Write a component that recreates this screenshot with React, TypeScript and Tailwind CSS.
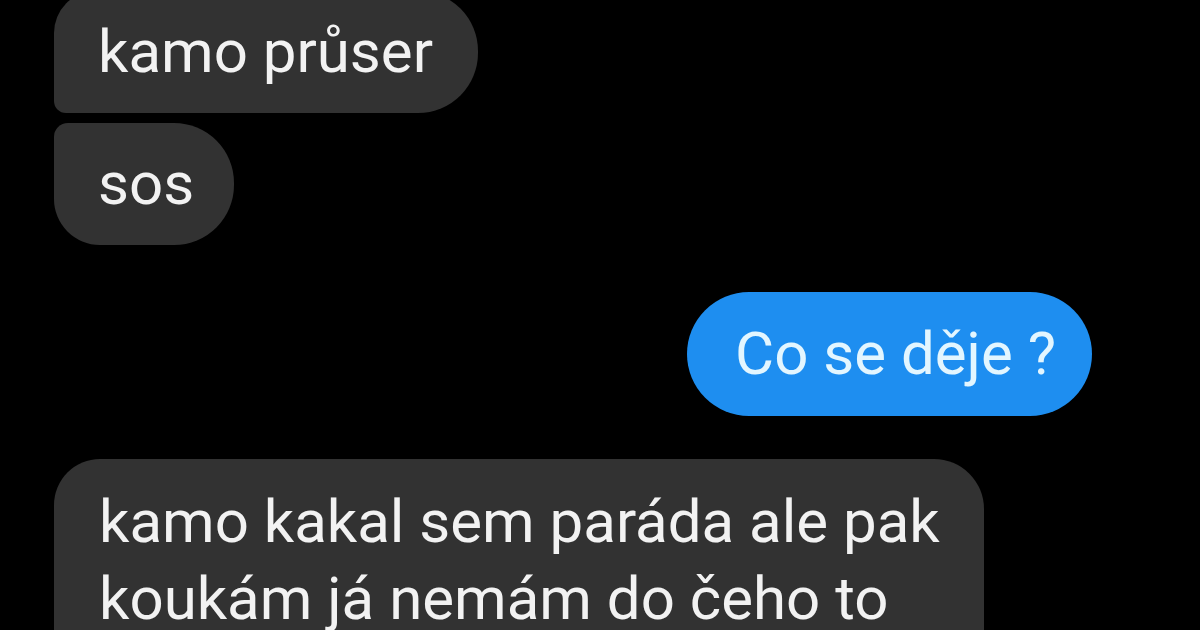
import React from 'react';

type Msg = {
    id: number;
    text: React.ReactNode;
    mine?: boolean;
    shape: string;
    gap: string;
    pad: string;
};

const messages: Msg[] = [
    { id: 1, text: 'kamo průser', shape: 'rounded-tl-[42px] rounded-r-[60px] rounded-bl-[12px]', gap: '-mt-[9px]', pad: 'pl-[44px] pr-[45px] py-[21px]' },
    { id: 2, text: 'sos', shape: 'rounded-tl-[14px] rounded-r-[60px] rounded-bl-[46px]', gap: 'mt-[10px]', pad: 'pl-[44px] pr-[40px] py-[21px]' },
    { id: 3, text: 'Co se děje ?', mine: true, shape: 'rounded-full', gap: 'mt-[47px]', pad: 'pl-[48px] pr-[36px] py-[22px]' },
    {
        id: 4,
        text: (
            <>
                kamo kakal sem paráda ale pak
                <br />
                koukám já nemám do čeho to
            </>
        ),
        shape: 'rounded-tl-[46px] rounded-tr-[50px]',
        gap: 'mt-[43px]',
        pad: 'pl-[45px] pr-[44px] pt-[24px] pb-[21px] leading-[77px]',
    },
];

const Bubble: React.FC<{ msg: Msg }> = ({ msg }) => {
    const colors = msg.mine ? 'bg-[#1e8ef0] text-[#e3f6ff]' : 'bg-[#323232] text-[#f2f2f2]';
    return (
        <div className={`flex ${msg.mine ? 'justify-end' : 'justify-start'} ${msg.gap}`}>
            <div className={`${colors} ${msg.shape} ${msg.pad} whitespace-nowrap`}>{msg.text}</div>
        </div>
    );
};

const App: React.FC = () => {
    return (
        <div
            className="w-[1200px] h-[630px] overflow-hidden bg-black pl-[54px] pr-[108px] text-[60px] leading-[80px]"
            style={{ fontFamily: 'Roboto, "Liberation Sans", sans-serif' }}
        >
            <div className="flex flex-col">
                {messages.map(m => (
                    <Bubble key={m.id} msg={m} />
                ))}
            </div>
        </div>
    );
};

export default App;
